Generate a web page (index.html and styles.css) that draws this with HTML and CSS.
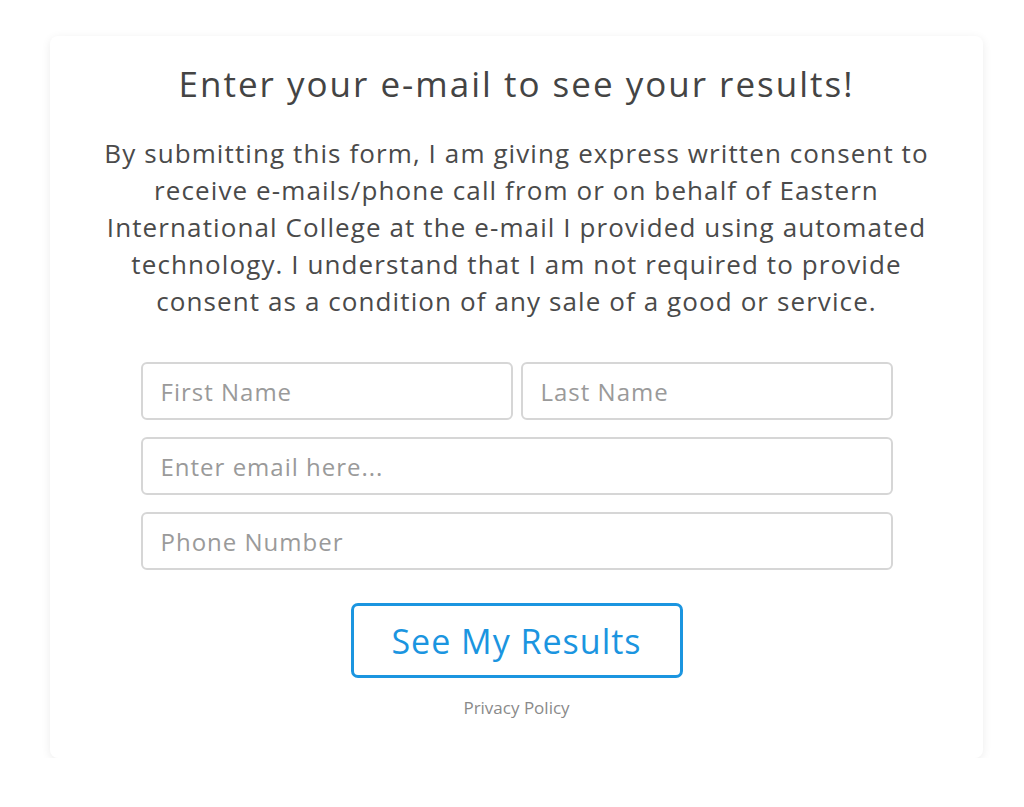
FILE: index.html
```html
<!DOCTYPE html>
<html lang="en">
<head>
  <meta charset="UTF-8">
  <meta name="viewport" content="width=device-width, initial-scale=1.0">
  <title>See Your Results</title>
  <link rel="stylesheet" href="styles.css">
</head>
<body>
  <div class="card">
    <h1>Enter your e-mail to see your results!</h1>
    <p class="consent">By submitting this form, I am giving express written consent to<br>
      receive e-mails/phone call from or on behalf of Eastern<br>
      International College at the e-mail I provided using automated<br>
      technology. I understand that I am not required to provide<br>
      consent as a condition of any sale of a good or service.</p>

    <form class="lead-form" onsubmit="return false">
      <div class="row">
        <input type="text" placeholder="First Name">
        <input type="text" placeholder="Last Name">
      </div>
      <input type="email" placeholder="Enter email here...">
      <input type="tel" placeholder="Phone Number">
      <button type="submit" class="results-btn">See My Results</button>
    </form>

    <a class="privacy" href="#">Privacy Policy</a>
  </div>
</body>
</html>
```

FILE: styles.css
```css
body {
  margin: 0;
  padding: 36px 0 0 50px;
  background: #ffffff;
  font-family: "Open Sans", Lato, Arial, sans-serif;
  color: #444444;
}
.card {
  width: 933px;
  height: 722px;
  box-sizing: border-box;
  padding: 26px 0 0;
  background: #ffffff;
  border-radius: 8px;
  box-shadow: 0 2px 10px rgba(0, 0, 0, 0.08);
  text-align: center;
}
h1 {
  margin: 0;
  font-size: 35px;
  font-weight: 400;
  line-height: 44px;
  letter-spacing: 2px;
  color: #444444;
}
.consent {
  width: 900px;
  margin: 29px auto 0;
  font-size: 26px;
  line-height: 37px;
  font-weight: 400;
  letter-spacing: 1.1px;
  color: #4a4a4a;
}
.lead-form {
  width: 752px;
  margin: 42px auto 0;
  display: flex;
  flex-direction: column;
  gap: 17px;
  align-items: center;
}
.row {
  display: flex;
  gap: 8px;
  width: 100%;
}
.lead-form input {
  width: 100%;
  height: 58px;
  box-sizing: border-box;
  padding: 0 18px;
  border: 2px solid #d6d6d6;
  border-radius: 6px;
  font-family: inherit;
  font-size: 24px;
  letter-spacing: 1px;
  color: #444444;
  outline: none;
}
.lead-form input::placeholder { color: #9a9a9a; }
.results-btn {
  margin-top: 16px;
  width: 332px;
  height: 75px;
  background: #ffffff;
  border: 3px solid #1b95e0;
  border-radius: 7px;
  color: #1b95e0;
  font-family: inherit;
  font-size: 34px;
  letter-spacing: 1px;
  cursor: pointer;
}
.privacy {
  display: block;
  margin-top: 18px;
  font-size: 17px;
  color: #8a8a8a;
  text-decoration: none;
}
```
